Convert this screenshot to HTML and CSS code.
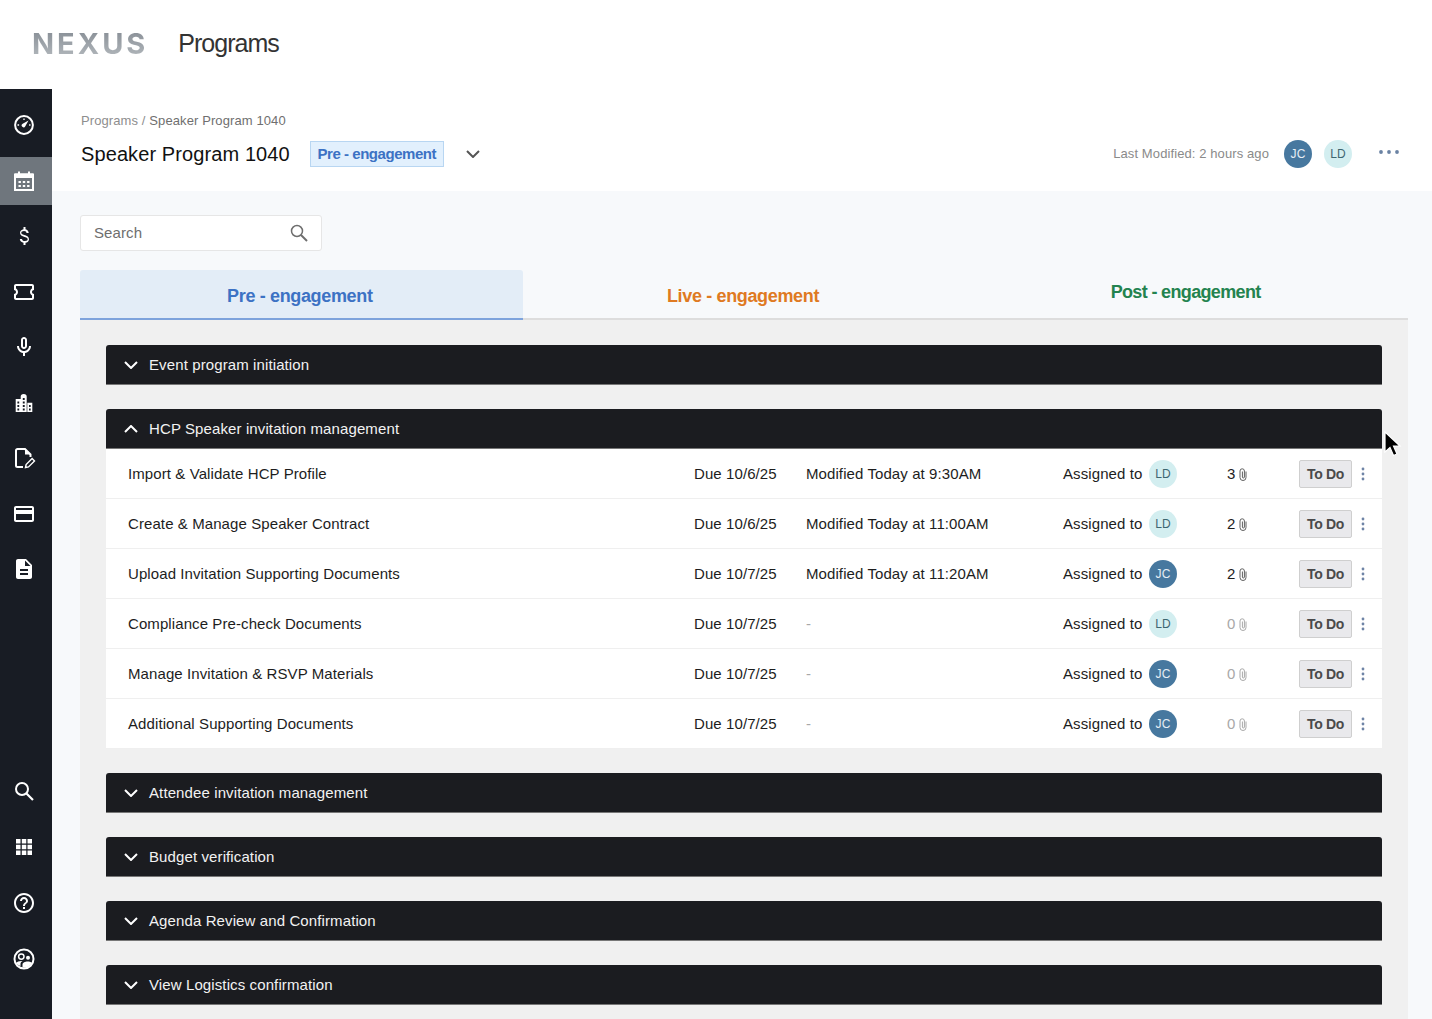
FILE: index.html
```html
<!DOCTYPE html>
<html lang="en">
<head>
<meta charset="utf-8">
<title>Programs</title>
<link rel="stylesheet" href="styles.css">
</head>
<body>
<svg class="defs" width="0" height="0" aria-hidden="true">
  <symbol id="clip" viewBox="0 0 8 13"><path d="M7 3.5v6a3 3 0 0 1-6 0V3a2.200 2.200 0 0 1 4.400 0v6a1 1 0 0 1-2 0V3.500" fill="none" stroke="currentColor" stroke-width="1"/></symbol>
  <symbol id="dots" viewBox="0 0 4 14"><circle cx="2" cy="2" r="1.4"/><circle cx="2" cy="7" r="1.4"/><circle cx="2" cy="12" r="1.4"/></symbol>
  <symbol id="down" viewBox="0 0 14 8"><path d="M1 1l6 6 6-6" fill="none" stroke="currentColor" stroke-width="2"/></symbol>
  <symbol id="up" viewBox="0 0 14 8"><path d="M1 7l6-6 6 6" fill="none" stroke="currentColor" stroke-width="2"/></symbol>
</svg>
<header class="topbar">
  <span class="logo">NEXUS</span>
  <span class="app-title">Programs</span>
</header>
<div class="shell">
  <nav class="sidebar">
    <div class="nav-group">
      <a class="nav-item"><svg viewBox="0 0 24 24" class="nav-icon"><circle cx="12" cy="12" r="8.900" fill="none" stroke="currentColor" stroke-width="2"/><path d="M16.500 7.500l-5.800 3.200a1.900 1.900 0 1 0 2.600 2.600z" fill="currentColor"/><path d="M12 5.500v1.600M5.500 12h1.600M18.500 12h-1.400" stroke="currentColor" stroke-width="1.300"/></svg></a>
      <a class="nav-item active"><svg viewBox="0 0 24 24" class="nav-icon"><path d="M3 5.500h18V21H3z" fill="none" stroke="currentColor" stroke-width="2"/><path d="M3 4.500h18V9H3zM6 2.500h2V6H6zM16 2.500h2V6h-2z" fill="currentColor"/><path d="M6.500 12h2.400v2H6.500zM10.800 12h2.400v2h-2.400zM15.100 12h2.400v2h-2.400zM6.500 16h2.400v2H6.500zM10.800 16h2.400v2h-2.400zM15.100 16h2.400v2h-2.400z" fill="currentColor"/></svg></a>
      <a class="nav-item"><svg viewBox="0 0 24 24" class="nav-icon"><path d="M11.800 10.900c-2.270-.590-3-1.200-3-2.150 0-1.090 1.010-1.850 2.700-1.850 1.780 0 2.440.850 2.500 2.100h2.210c-.070-1.720-1.120-3.300-3.210-3.810V3h-2v2.160c-1.940.420-3.500 1.680-3.500 3.610 0 2.310 1.910 3.460 4.700 4.130 2.500.600 3 1.480 3 2.410 0 .690-.490 1.790-2.700 1.790-2.060 0-2.870-.920-2.980-2.100h-2.200c.120 2.190 1.760 3.420 3.680 3.830V21h2v-2.150c1.950-.370 3.500-1.500 3.500-3.550 0-2.840-2.430-3.810-4.700-4.400z" fill="currentColor" transform="translate(0.500 0)"/></svg></a>
      <a class="nav-item"><svg viewBox="0 0 24 24" class="nav-icon"><path d="M22 10V6c0-1.110-.9-2-2-2H4c-1.100 0-1.990.890-1.990 2v4c1.100 0 1.990.9 1.990 2s-.890 2-2 2v4c0 1.100.9 2 2 2h16c1.100 0 2-.9 2-2v-4c-1.100 0-2-.9-2-2s.9-2 2-2zm-2-1.460c-1.190.690-2 1.990-2 3.460s.810 2.770 2 3.460V18H4v-2.540c1.190-.690 2-1.990 2-3.460 0-1.480-.8-2.770-1.990-3.460L4 6h16v2.540z" fill="currentColor"/></svg></a>
      <a class="nav-item"><svg viewBox="0 0 24 24" class="nav-icon"><path d="M12 14c1.660 0 3-1.340 3-3V5c0-1.660-1.340-3-3-3S9 3.340 9 5v6c0 1.660 1.340 3 3 3zm-1-9c0-.550.450-1 1-1s1 .450 1 1v6c0 .550-.450 1-1 1s-1-.450-1-1V5zM17 11c0 2.760-2.240 5-5 5s-5-2.240-5-5H5c0 3.530 2.610 6.430 6 6.920V21h2v-3.080c3.390-.490 6-3.390 6-6.920h-2z" fill="currentColor"/></svg></a>
      <a class="nav-item"><svg viewBox="0 0 24 24" class="nav-icon"><path fill-rule="evenodd" d="M3.700 8h5V5.500a3 2.500 0 0 1 6 0V21H3.700zM15.300 11.700h5V21h-5zM5.400 10.500v1.900h1.800v-1.900zM5.400 14v1.900h1.800V14zM5.400 17.500v1.900h1.800v-1.900zM10.800 7v1.900h1.900V7zM10.800 10.500v1.900h1.900v-1.900zM10.800 14v1.900h1.900V14zM10.800 17.500v1.900h1.900v-1.900zM17 14v1.900h1.700V14zM17 17.500v1.900h1.700v-1.900z" fill="currentColor"/></svg></a>
      <a class="nav-item"><svg viewBox="0 0 24 24" class="nav-icon"><path d="M11 21H5.500a1.500 1.500 0 0 1-1.500-1.500v-15A1.500 1.500 0 0 1 5.500 3H13l5.500 5.500V11" fill="none" stroke="currentColor" stroke-width="2"/><path d="M13 3v5.500h5.500" fill="currentColor"/><path d="M13.500 21.500l.6-3 6-6 2.400 2.400-6 6z" fill="none" stroke="currentColor" stroke-width="1.400"/></svg></a>
      <a class="nav-item"><svg viewBox="0 0 24 24" class="nav-icon"><path d="M20 4H4c-1.110 0-1.990.890-1.990 2L2 18c0 1.110.890 2 2 2h16c1.110 0 2-.890 2-2V6c0-1.110-.890-2-2-2zm0 14H4v-6h16v6zm0-10H4V6h16v2z" fill="currentColor"/></svg></a>
      <a class="nav-item"><svg viewBox="0 0 24 24" class="nav-icon"><path d="M14 2H6c-1.100 0-1.990.9-1.990 2L4 20c0 1.100.890 2 1.990 2H18c1.100 0 2-.9 2-2V8l-6-6zm2 16H8v-2h8v2zm0-4H8v-2h8v2zm-3-5V3.500L18.500 9H13z" fill="currentColor"/></svg></a>
    </div>
    <div class="nav-group nav-group-bottom">
      <a class="nav-item"><svg viewBox="0 0 24 24" class="nav-icon"><circle cx="10" cy="10" r="6" fill="none" stroke="currentColor" stroke-width="2"/><path d="M14.500 14.500l6.500 6.500" stroke="currentColor" stroke-width="2.200"/></svg></a>
      <a class="nav-item"><svg viewBox="0 0 24 24" class="nav-icon"><path d="M4 4h4.500v4.500H4zM9.800 4h4.500v4.500H9.800zM15.500 4H20v4.500h-4.500zM4 9.800h4.500v4.500H4zM9.800 9.800h4.500v4.500H9.800zM15.500 9.800H20v4.500h-4.500zM4 15.500h4.500V20H4zM9.800 15.500h4.500V20H9.800zM15.500 15.500H20V20h-4.500z" fill="currentColor"/></svg></a>
      <a class="nav-item"><svg viewBox="0 0 24 24" class="nav-icon"><path d="M11 18h2v-2h-2v2zm1-16C6.480 2 2 6.480 2 12s4.480 10 10 10 10-4.480 10-10S17.520 2 12 2zm0 18c-4.410 0-8-3.590-8-8s3.590-8 8-8 8 3.590 8 8-3.590 8-8 8zm0-14c-2.210 0-4 1.790-4 4h2c0-1.100.9-2 2-2s2 .9 2 2c0 2-3 1.750-3 5h2c0-2.250 3-2.500 3-5 0-2.210-1.790-4-4-4z" fill="currentColor"/></svg></a>
      <a class="nav-item"><svg viewBox="0 0 24 24" class="nav-icon"><circle cx="12" cy="12" r="9.500" fill="none" stroke="currentColor" stroke-width="2"/><circle cx="9.300" cy="9.600" r="2.700" fill="none" stroke="currentColor" stroke-width="1.500"/><circle cx="16" cy="10.700" r="2" fill="currentColor"/><path d="M10.500 20.500v-3c0-1.800 2.800-3 5-3 1.500 0 3.300.4 4.500 1.300-1.300 2.700-4 4.700-7.500 5zM4 16c1-1.300 3-2 5.300-2 .5 0 1 0 1.400.1-1.500.7-2.200 1.700-2.200 3v1.900C6.500 18.400 5 17.500 4 16z" fill="currentColor"/></svg></a>
    </div>
  </nav>
  <main class="main">
    <section class="subheader">
      <div class="sub-left">
        <div class="breadcrumb">Programs / <span class="crumb-current">Speaker Program 1040</span></div>
        <div class="title-row">
          <h1 class="page-title">Speaker Program 1040</h1>
          <span class="stage-badge">Pre - engagement</span>
          <svg class="stage-caret"><use href="#down"/></svg>
        </div>
      </div>
      <div class="sub-right">
        <span class="modified-note">Last Modified: 2 hours ago</span>
        <span class="avatar avatar-jc">JC</span>
        <span class="avatar avatar-ld">LD</span>
        <svg class="more" viewBox="0 0 20 4"><circle cx="2" cy="2" r="1.900"/><circle cx="10" cy="2" r="1.900"/><circle cx="18" cy="2" r="1.900"/></svg>
      </div>
    </section>
    <section class="content">
      <div class="search">
        <span class="search-label">Search</span>
        <svg class="search-icon" viewBox="0 0 18 18"><circle cx="7" cy="7" r="5.500" fill="none" stroke="currentColor" stroke-width="1.500"/><path d="M11 11l6 6" stroke="currentColor" stroke-width="2"/></svg>
      </div>
      <div class="tabs">
        <div class="tab tab-pre">Pre - engagement</div>
        <div class="tab tab-live">Live - engagement</div>
        <div class="tab tab-post">Post - engagement</div>
      </div>
      <div class="panel">
        <div class="accordion"><svg class="chev"><use href="#down"/></svg>Event program initiation</div>
        <div class="group">
          <div class="accordion"><svg class="chev"><use href="#up"/></svg>HCP Speaker invitation management</div>
          <div class="row">
            <span>Import &amp; Validate HCP Profile</span><span>Due 10/6/25</span><span>Modified Today at 9:30AM</span><span>Assigned to</span>
            <span class="avatar avatar-ld">LD</span>
            <span class="count">3<svg class="clip"><use href="#clip"/></svg></span>
            <span class="status">To Do</span><svg class="kebab"><use href="#dots"/></svg>
          </div>
          <div class="row">
            <span>Create &amp; Manage Speaker Contract</span><span>Due 10/6/25</span><span>Modified Today at 11:00AM</span><span>Assigned to</span>
            <span class="avatar avatar-ld">LD</span>
            <span class="count">2<svg class="clip"><use href="#clip"/></svg></span>
            <span class="status">To Do</span><svg class="kebab"><use href="#dots"/></svg>
          </div>
          <div class="row">
            <span>Upload Invitation Supporting Documents</span><span>Due 10/7/25</span><span>Modified Today at 11:20AM</span><span>Assigned to</span>
            <span class="avatar avatar-jc">JC</span>
            <span class="count">2<svg class="clip"><use href="#clip"/></svg></span>
            <span class="status">To Do</span><svg class="kebab"><use href="#dots"/></svg>
          </div>
          <div class="row">
            <span>Compliance Pre-check Documents</span><span>Due 10/7/25</span><span class="muted">-</span><span>Assigned to</span>
            <span class="avatar avatar-ld">LD</span>
            <span class="count muted">0<svg class="clip"><use href="#clip"/></svg></span>
            <span class="status">To Do</span><svg class="kebab"><use href="#dots"/></svg>
          </div>
          <div class="row">
            <span>Manage Invitation &amp; RSVP Materials</span><span>Due 10/7/25</span><span class="muted">-</span><span>Assigned to</span>
            <span class="avatar avatar-jc">JC</span>
            <span class="count muted">0<svg class="clip"><use href="#clip"/></svg></span>
            <span class="status">To Do</span><svg class="kebab"><use href="#dots"/></svg>
          </div>
          <div class="row">
            <span>Additional Supporting Documents</span><span>Due 10/7/25</span><span class="muted">-</span><span>Assigned to</span>
            <span class="avatar avatar-jc">JC</span>
            <span class="count muted">0<svg class="clip"><use href="#clip"/></svg></span>
            <span class="status">To Do</span><svg class="kebab"><use href="#dots"/></svg>
          </div>
        </div>
        <div class="accordion"><svg class="chev"><use href="#down"/></svg>Attendee invitation management</div>
        <div class="accordion"><svg class="chev"><use href="#down"/></svg>Budget verification</div>
        <div class="accordion"><svg class="chev"><use href="#down"/></svg>Agenda Review and Confirmation</div>
        <div class="accordion"><svg class="chev"><use href="#down"/></svg>View Logistics confirmation</div>
      </div>
    </section>
  </main>
</div>
<svg class="cursor" viewBox="0 0 18 27"><path d="M1 1v20l5-4.500 3.500 8 3.500-1.500-3.500-8H16z" fill="#000" stroke="#fff" stroke-width="1.200"/></svg>
</body>
</html>
```
FILE: styles.css
```css
* { box-sizing: border-box; }
html, body { margin: 0; height: 1019px; overflow: hidden; }
body {
  position: relative;
  font-family: "Liberation Sans", Arial, sans-serif;
  color: #1b1c20;
  background: #fff;
}
.defs { position: absolute; }

.topbar {
  height: 89px;
  display: flex;
  align-items: center;
  gap: 30px;
  padding: 0 0 2px 32px;
  background: #fff;
}
.logo {
  font-family: Inter, "Liberation Sans", sans-serif;
  font-weight: 700;
  font-size: 29px;
  letter-spacing: 3px;
  line-height: 1;
  background: linear-gradient(180deg, #868d94, #b3b8bd);
  -webkit-background-clip: text;
  background-clip: text;
  color: transparent;
}
.app-title {
  font-size: 25px;
  letter-spacing: -1px;
  color: #333;
}

.shell { display: flex; height: 930px; }
.sidebar {
  width: 52px;
  flex: none;
  background: #181c24;
  color: #fff;
  display: flex;
  flex-direction: column;
  justify-content: space-between;
  padding: 12px 0 36px;
}
.nav-group { display: flex; flex-direction: column; gap: 7.5px; }
.nav-group-bottom { gap: 8px; }
.nav-item {
  height: 48px;
  display: flex;
  align-items: center;
  justify-content: center;
  padding-right: 4px;
}
.nav-item.active { background: #6f767d; }
.nav-icon { width: 24px; height: 24px; }

.main { flex: 1; display: flex; flex-direction: column; min-width: 0; }
.subheader {
  height: 102px;
  flex: none;
  background: #fff;
  display: flex;
  justify-content: space-between;
  padding: 24px 33px 0 29px;
}
.breadcrumb { font-size: 13px; line-height: 16px; color: #8e8e8e; letter-spacing: 0.1px; }
.crumb-current { color: #6f6f6f; }
.title-row { display: flex; align-items: center; margin-top: 12px; height: 26px; }
.page-title { margin: 0; font-size: 20px; font-weight: 400; color: #111; letter-spacing: 0.1px; }
.stage-badge {
  margin-left: 20px;
  height: 26px;
  width: 134px;
  display: flex;
  align-items: center;
  justify-content: center;
  background: #e2f0fd;
  border: 1px solid #b8d6f2;
  color: #3c72c4;
  font-size: 15px;
  line-height: 16px;
  font-weight: 700;
  letter-spacing: -0.45px;
  white-space: nowrap;
}
.stage-caret { width: 14px; height: 8px; margin-left: 22px; color: #555; }

.sub-right { display: flex; align-items: center; height: 28px; margin-top: 27px; }
.modified-note { font-size: 13px; line-height: 14px; color: #8a8a8a; letter-spacing: 0.1px; margin: 0 15px 0 0; }
.sub-right .avatar + .avatar { margin-left: 12px; }
.more { width: 20px; height: 4px; fill: #6a82a3; margin-left: 27px; margin-bottom: 5px; }

.avatar {
  width: 28px;
  height: 28px;
  border-radius: 50%;
  display: flex;
  align-items: center;
  justify-content: center;
  font-size: 12px;
  letter-spacing: 0.2px;
}
.avatar-jc { background: #47789f; color: #e6eef5; }
.avatar-ld { background: #d3eef0; color: #3d6670; }

.content {
  flex: 1;
  background: #f7f9fb;
  padding: 24px 24px 0 28px;
  min-height: 0;
}
.search {
  width: 242px;
  height: 36px;
  background: #fff;
  border: 1px solid #e6e6e6;
  border-radius: 3px;
  display: flex;
  align-items: center;
  justify-content: space-between;
  padding: 0 13px;
}
.search-label { font-size: 15px; line-height: 16px; color: #6e6e6e; letter-spacing: 0.1px; }
.search-icon { width: 18px; height: 18px; color: #6e6e6e; }

.tabs {
  margin-top: 19px;
  display: grid;
  grid-template-columns: repeat(3, 1fr);
  height: 50px;
  border-bottom: 2px solid #ddd;
}
.tab {
  display: flex;
  align-items: center;
  justify-content: center;
  font-size: 18px;
  font-weight: 700;
  letter-spacing: -0.35px;
  padding: 4px 3px 0 0;
  height: 50px;
  border-bottom: 2px solid transparent;
}
.tab-pre { background: #e3edf7; color: #3c72c4; border-bottom-color: #7da3dc; border-radius: 3px 3px 0 0; }
.tab-live { color: #df7a22; padding-right: 2px; }
.tab-post { color: #23834f; padding: 0 2px 3px 0; letter-spacing: -0.65px; }

.panel {
  background: #f0f0f0;
  padding: 25px 26px;
  display: flex;
  flex-direction: column;
  gap: 24px;
  height: 720px;
  overflow: hidden;
}
.accordion {
  height: 40px;
  flex: none;
  background: #1b1c20;
  color: #f2f2f2;
  border-radius: 3px 3px 0 0;
  border-bottom: 1px solid #777;
  display: flex;
  align-items: center;
  font-size: 15px;
  letter-spacing: 0.11px;
  padding-left: 17.5px;
}
.chev { width: 14px; height: 8px; margin-right: 11.5px; color: #fff; }
.group { display: flex; flex-direction: column; flex: none; }

.row {
  height: 50px;
  background: #fff;
  border-bottom: 1px solid #efefef;
  padding: 1px 0 0 22px;
  display: grid;
  grid-template-columns: 566px 112px 257px 86px 78px 72px 53px 1fr;
  align-items: center;
  font-size: 15px;
  line-height: 18px;
  letter-spacing: 0.09px;
  color: #1d1d1d;
}
.muted { color: #a8a8a8; }
.count { display: flex; align-items: center; gap: 4px; }
.clip { width: 8px; height: 13px; color: #5f5f5f; }
.count.muted .clip { color: #a8a8a8; }
.status {
  height: 28px;
  width: 53px;
  display: flex;
  align-items: center;
  justify-content: center;
  background: #e9e9ec;
  border: 1px solid #cfcfcf;
  border-radius: 2px;
  color: #4a4a4a;
  font-size: 14px;
  font-weight: 700;
  letter-spacing: -0.3px;
}
.kebab { width: 4px; height: 14px; fill: #6f84a6; margin-left: 9px; }

.cursor { position: absolute; left: 1384px; top: 431px; width: 18px; height: 27px; }
```
